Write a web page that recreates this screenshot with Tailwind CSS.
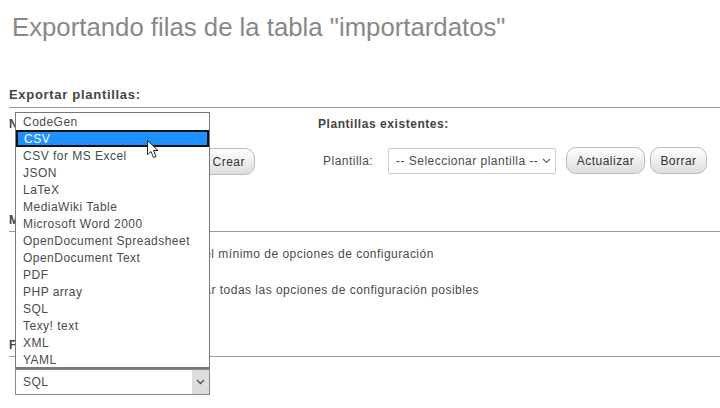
<!DOCTYPE html>
<html lang="es">
<head>
  <meta charset="UTF-8" />
  <title>Exportando filas</title>
  <script src="https://cdn.jsdelivr.net/npm/@tailwindcss/browser@4"></script>
</head>
<body class="bg-white font-['Liberation_Sans',sans-serif] text-[12px] text-[#4a4a4a] tracking-[0.48px] w-[720px] h-[408px] overflow-hidden relative">
  <h1 class="pl-3 pt-[13px] text-[25.75px] tracking-normal leading-[29px] text-[#888]">Exportando filas de la tabla "importardatos"</h1>

  <!-- Exportar plantillas -->
  <section class="mt-[46px] ml-[9px]">
    <h3 class="font-bold text-[13px] leading-[14px] tracking-[0.7px] text-[#444] pb-[5px] border-b border-[#999]">Exportar plantillas:</h3>
    <div class="flex">
      <div class="w-[309px]">
        <div class="font-bold text-[#444] leading-[14px] mt-[9px] tracking-[0.55px]">Nueva plantilla:</div>
        <div class="flex justify-end pr-[63px] mt-[17px]">
          <button class="h-[27px] pl-[11px] pr-[9px] rounded-[10px] border border-[#bbb] bg-gradient-to-b from-white to-[#ddd] text-[#333]">Crear</button>
        </div>
      </div>
      <div>
        <div class="font-bold text-[#444] leading-[14px] mt-[9px] tracking-[0.55px]">Plantillas existentes:</div>
        <div class="flex items-center mt-[16px] ml-[5px]">
          <span class="w-[65px]">Plantilla:</span>
          <div class="w-[168px] h-[26px] border border-[#ccc] rounded-[2px] flex items-center justify-between pl-[7px] pr-[4px]">
            <span>-- Seleccionar plantilla --</span>
            <svg width="9" height="6" viewBox="0 0 9 6"><path d="M1 1l3.5 3.5L8 1" fill="none" stroke="#666" stroke-width="1.2"/></svg>
          </div>
          <button class="ml-[10px] h-[27px] w-[79px] rounded-[10px] border border-[#bbb] bg-gradient-to-b from-white to-[#ddd] text-[#333]">Actualizar</button>
          <button class="ml-[5px] h-[27px] w-[57px] rounded-[10px] border border-[#bbb] bg-gradient-to-b from-white to-[#ddd] text-[#333]">Borrar</button>
        </div>
      </div>
    </div>
  </section>

  <!-- Método de exportación -->
  <section class="mt-[38px] ml-[9px]">
    <h3 class="font-bold text-[#444] leading-[14px] tracking-[0.55px] pb-[4px] border-b border-[#999]">Método de exportación:</h3>
    <p class="mt-[15px] leading-[14px] pl-[71px] whitespace-nowrap">Rápido, mostrar sólo el mínimo de opciones de configuración</p>
    <p class="mt-[22px] leading-[14px] pl-[73px] whitespace-nowrap">Personalizado, mostrar todas las opciones de configuración posibles</p>
  </section>

  <!-- Formato -->
  <section class="mt-[41px] ml-[9px]">
    <h3 class="font-bold text-[#444] leading-[14px] tracking-[0.55px] pb-[4px] border-b border-[#999]">Formato:</h3>
    <div class="ml-[6px] mt-[12px] w-[195px] h-[26px] border border-[#888] flex items-center justify-between pl-[7px]">
      <span>SQL</span>
      <span class="w-[17px] h-full bg-[#ddd] flex items-center justify-center">
        <svg width="9" height="6" viewBox="0 0 9 6"><path d="M1 1l3.5 3.5L8 1" fill="none" stroke="#555" stroke-width="1.4"/></svg>
      </span>
    </div>
  </section>

  <!-- Lista desplegable abierta -->
  <ul class="absolute left-[15px] top-[112px] w-[195px] h-[257px] bg-white border border-[#777] border-b-2 leading-[19px] text-[#4a4a4a]">
    <li class="pl-[7px] h-[17px]">CodeGen</li>
    <li class="pl-[6px] bg-[#1e90ff] text-white border-2 border-[#111] leading-[15px] h-[17px]">CSV</li>
    <li class="pl-[7px] h-[17px]">CSV for MS Excel</li>
    <li class="pl-[7px] h-[17px]">JSON</li>
    <li class="pl-[7px] h-[17px]">LaTeX</li>
    <li class="pl-[7px] h-[17px]">MediaWiki Table</li>
    <li class="pl-[7px] h-[17px]">Microsoft Word 2000</li>
    <li class="pl-[7px] h-[17px]">OpenDocument Spreadsheet</li>
    <li class="pl-[7px] h-[17px]">OpenDocument Text</li>
    <li class="pl-[7px] h-[17px]">PDF</li>
    <li class="pl-[7px] h-[17px]">PHP array</li>
    <li class="pl-[7px] h-[17px]">SQL</li>
    <li class="pl-[7px] h-[17px]">Texy! text</li>
    <li class="pl-[7px] h-[17px]">XML</li>
    <li class="pl-[7px] h-[17px]">YAML</li>
  </ul>

  <!-- Cursor -->
  <svg class="absolute left-[147px] top-[140px]" width="14" height="20" viewBox="0 0 14 20">
    <path d="M0.5 0.5V14.5L4 11.5L6.5 17.5L9 16.5L6.5 10.5H11Z" fill="#fff" stroke="#222" stroke-width="1"/>
  </svg>
</body>
</html>
